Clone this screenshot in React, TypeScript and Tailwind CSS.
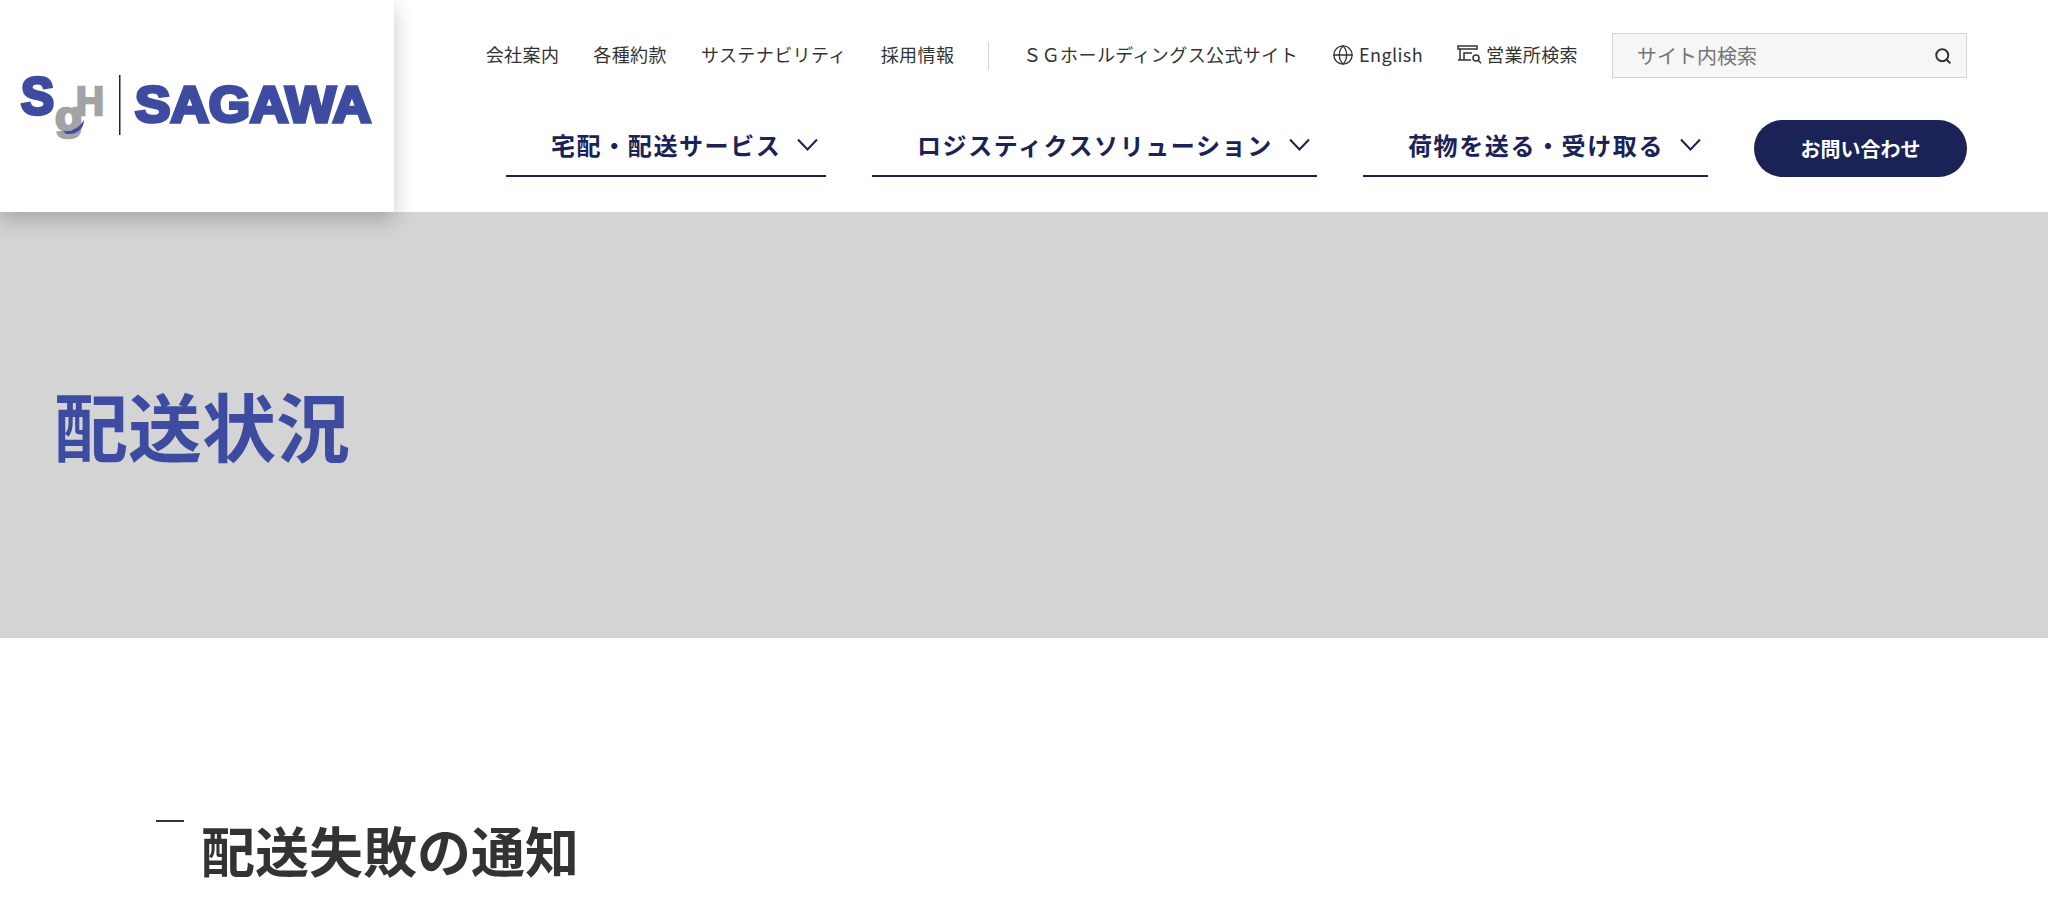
import { Globe, Search } from "lucide-react";

const jp = "font-['Noto_Sans_CJK_JP','Noto_Sans',sans-serif]";

const topLinks = ["会社案内", "各種約款", "サステナビリティ", "採用情報"];

const navItems = [
  { label: "宅配・配送サービス", width: "w-[320px]" },
  { label: "ロジスティクスソリューション", width: "w-[445px]" },
  { label: "荷物を送る・受け取る", width: "w-[345px]" },
];

const Logo = () => (
  <svg width="394" height="212" viewBox="0 0 394 212">
    <text x="55" y="130" fontFamily="Liberation Sans" fontWeight="700" fontSize="40" fill="#a3a3a5" stroke="#a3a3a5" strokeWidth="2.5" textLength="28" lengthAdjust="spacingAndGlyphs">g</text>
    <text x="76" y="115" fontFamily="Liberation Sans" fontWeight="700" fontSize="40" fill="#a3a3a5" stroke="#a3a3a5" strokeWidth="2.5" textLength="28" lengthAdjust="spacingAndGlyphs">H</text>
    <text x="21" y="114" fontFamily="Liberation Sans" fontWeight="700" fontSize="52" fill="#3d4ba0" stroke="#3d4ba0" strokeWidth="3.5" textLength="33" lengthAdjust="spacingAndGlyphs">S</text>
    <path d="M63 131 C72 132 79 128 84 120 C84 128 78 135 66 134 Z" fill="#3d4ba0" />
    <rect x="119" y="75" width="1.5" height="60" fill="#1a2256" />
    <text x="135" y="122" fontFamily="Liberation Sans" fontWeight="700" fontSize="50" fill="#3d4ba0" stroke="#3d4ba0" strokeWidth="3.5" textLength="236" lengthAdjust="spacingAndGlyphs">SAGAWA</text>
  </svg>
);

const OfficeIcon = () => (
  <svg width="26" height="22" viewBox="0 0 26 22" fill="none" stroke="#333" strokeWidth="1.5">
    <path d="M1 2h19v3H1z" />
    <path d="M3 5v11M1 16h13M7 16V9h8" />
    <circle cx="19" cy="14" r="3" />
    <path d="M21.2 16.2l2.8 3" />
  </svg>
);

const NavChevron = () => (
  <svg width="21" height="13" viewBox="0 0 21 13" fill="none" stroke="#1a2256" strokeWidth="2">
    <path d="M1 1.5l9.5 10 9.5-10" />
  </svg>
);

export default function App() {
  return (
    <div className={`${jp} h-[922px] w-full overflow-hidden bg-white text-[#333]`}>
      <header className="flex h-[212px]">
        <div className="relative z-10 h-[212px] w-[394px] shrink-0 bg-white shadow-[0_8px_20px_rgba(0,0,0,0.22)]">
          <Logo />
        </div>
        <div className="flex flex-1 flex-col items-end pr-[81px]">
          <div className="mt-[33px] flex h-[45px] items-center text-[18px] tracking-[0.4px]">
            <div className="flex gap-[34px] pb-[2px]">
              {topLinks.map((link) => (
                <span key={link}>{link}</span>
              ))}
            </div>
            <div className="mx-[34px] h-[28px] w-px bg-[#d4d4d4]" />
            <span className="pb-[2px]">ＳＧホールディングス公式サイト</span>
            <span className="ml-[34px] flex items-center gap-[5px] pb-[2px]">
              <Globe size={22} strokeWidth={1.4} />
              English
            </span>
            <span className="ml-[34px] flex items-center gap-[3px] pb-[2px]">
              <OfficeIcon />
              営業所検索
            </span>
            <div className="ml-[34px] flex h-[45px] w-[355px] items-center justify-between border border-[#d4d4d4] bg-[#f6f6f6] pl-[24px] pr-[14px] tracking-normal">
              <span className="text-[20px] text-[#757575]">サイト内検索</span>
              <Search size={18} strokeWidth={2.6} />
            </div>
          </div>
          <div className="mt-[42px] flex items-start gap-[46px]">
            {navItems.map((item) => (
              <div
                key={item.label}
                className={`${item.width} flex h-[57px] items-center gap-[16px] border-b-2 border-[#1a2256] pb-[6px] pl-[45px] text-[24px] font-bold tracking-[1.6px] text-[#1a2256]`}
              >
                <span>{item.label}</span>
                <NavChevron />
              </div>
            ))}
            <div className="flex h-[57px] w-[213px] items-center justify-center rounded-full bg-[#1a2256] text-[20px] font-bold text-white">
              お問い合わせ
            </div>
          </div>
        </div>
      </header>
      <div className="flex h-[426px] items-center bg-[#d4d4d4] pb-[4px] pl-[54px]">
        <h1 className="text-[74px] font-bold text-[#3d4ba0]">配送状況</h1>
      </div>
      <section className="flex items-start pl-[156px] pt-[180px]">
        <div className="mt-[2px] h-[2px] w-[28px] bg-[#333]" />
        <h2 className="ml-[17px] text-[54px] font-bold leading-[64px] text-[#333]">配送失敗の通知</h2>
      </section>
    </div>
  );
}
